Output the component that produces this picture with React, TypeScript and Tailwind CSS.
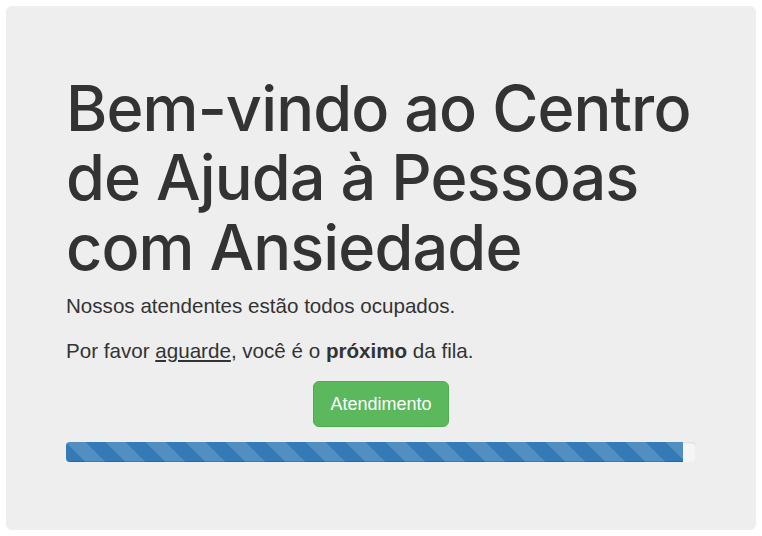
export default function App() {
  return (
    <div className="bg-white p-[6px] font-['Liberation_Sans',Arial,sans-serif] text-[#333]">
      <div className="rounded-[6px] bg-[#eee] px-[60px] pb-[48px] pt-[48px]">
        <h1 className="mb-[9px] mt-[20px] whitespace-nowrap font-['Inter',sans-serif] text-[63px] font-medium leading-[1.1] tracking-[-0.9px]">
          Bem-vindo ao Centro
          <br />
          de Ajuda à Pessoas
          <br />
          com Ansiedade
        </h1>
        <p className="mb-[15px] text-[20.6px] leading-[30px]">Nossos atendentes estão todos ocupados.</p>
        <p className="mb-[15px] text-[20.6px] leading-[30px]">
          Por favor{' '}
          <a href="#" className="text-[#333] underline">
            aguarde
          </a>
          , você é o <b>próximo</b> da fila.
        </p>
        <p className="mb-[15px] text-center">
          <button
            type="button"
            className="inline-block rounded-[6px] border border-[#4cae4c] bg-[#5cb85c] px-[16px] py-[10px] text-[18px] leading-[24px] text-white"
          >
            Atendimento
          </button>
        </p>
        <div className="mb-[20px] h-[20px] overflow-hidden rounded-[4px] bg-[#f5f5f5] shadow-[inset_0_1px_2px_rgba(0,0,0,0.1)]">
          <div
            className="h-full bg-[#337ab7] bg-[linear-gradient(45deg,rgba(255,255,255,.15)_25%,transparent_25%,transparent_50%,rgba(255,255,255,.15)_50%,rgba(255,255,255,.15)_75%,transparent_75%,transparent)] bg-[length:40px_40px] shadow-[inset_0_-1px_0_rgba(0,0,0,0.15)]"
            style={{ width: '98%' }}
          />
        </div>
      </div>
    </div>
  );
}
